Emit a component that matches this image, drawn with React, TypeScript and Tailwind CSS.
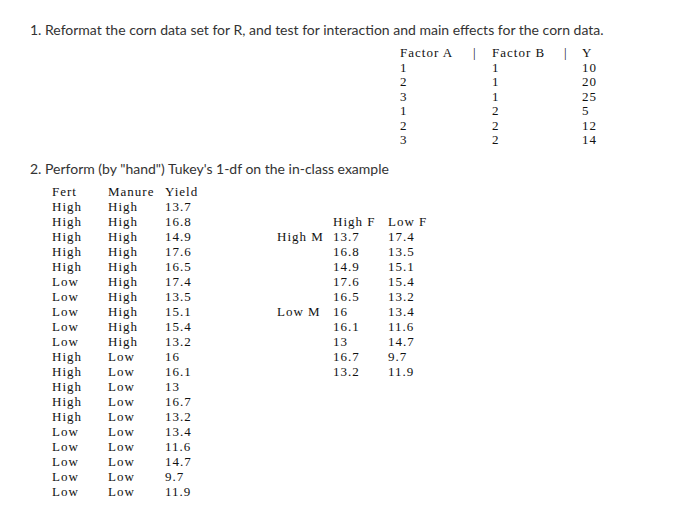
import React from "react";

const topRows = [
  ["1", "1", "10"],
  ["2", "1", "20"],
  ["3", "1", "25"],
  ["1", "2", "5"],
  ["2", "2", "12"],
  ["3", "2", "14"],
];

const leftRows: [string, string, string][] = [
  ["High", "High", "13.7"],
  ["High", "High", "16.8"],
  ["High", "High", "14.9"],
  ["High", "High", "17.6"],
  ["High", "High", "16.5"],
  ["Low", "High", "17.4"],
  ["Low", "High", "13.5"],
  ["Low", "High", "15.1"],
  ["Low", "High", "15.4"],
  ["Low", "High", "13.2"],
  ["High", "Low", "16"],
  ["High", "Low", "16.1"],
  ["High", "Low", "13"],
  ["High", "Low", "16.7"],
  ["High", "Low", "13.2"],
  ["Low", "Low", "13.4"],
  ["Low", "Low", "11.6"],
  ["Low", "Low", "14.7"],
  ["Low", "Low", "9.7"],
  ["Low", "Low", "11.9"],
];

const rightRows: [string, string, string][] = [
  ["High M", "13.7", "17.4"],
  ["", "16.8", "13.5"],
  ["", "14.9", "15.1"],
  ["", "17.6", "15.4"],
  ["", "16.5", "13.2"],
  ["Low M", "16", "13.4"],
  ["", "16.1", "11.6"],
  ["", "13", "14.7"],
  ["", "16.7", "9.7"],
  ["", "13.2", "11.9"],
];

export default function App() {
  return (
    <div className="w-[698px] h-[517px] bg-white pl-[30px] pt-[20px] font-['Lato','Open_Sans',sans-serif] text-[14px] text-[#333] overflow-hidden">
      <p className="leading-[20px] whitespace-nowrap">
        1. Reformat the corn data set for R, and test for interaction and main effects for the corn data.
      </p>
      <div className="ml-[370px] mt-[6px] font-['Liberation_Serif',serif] text-[13px] tracking-[1px] text-[#111] leading-[14.5px]">
        <div className="grid grid-cols-[73px_19px_72px_18px_40px] whitespace-pre">
          <span>Factor A</span>
          <span>|</span>
          <span>Factor B</span>
          <span>|</span>
          <span>Y</span>
          {topRows.map((r, i) => (
            <React.Fragment key={i}>
              <span>{r[0]}</span>
              <span></span>
              <span>{r[1]}</span>
              <span></span>
              <span>{r[2]}</span>
            </React.Fragment>
          ))}
        </div>
      </div>
      <p className="mt-[11px] leading-[20px] whitespace-nowrap">
        2. Perform (by "hand") Tukey's 1-df on the in-class example
      </p>
      <div className="flex mt-[5px] font-['Liberation_Serif',serif] text-[13px] tracking-[1px] text-[#111] leading-[15px]">
        <div className="ml-[22px] w-[225px] grid grid-cols-[56px_57px_60px] content-start whitespace-pre">
          <span>Fert</span>
          <span>Manure</span>
          <span>Yield</span>
          {leftRows.map((r, i) => (
            <React.Fragment key={i}>
              <span>{r[0]}</span>
              <span>{r[1]}</span>
              <span>{r[2]}</span>
            </React.Fragment>
          ))}
        </div>
        <div className="mt-[30px] grid grid-cols-[56px_55px_50px] content-start whitespace-pre">
          <span></span>
          <span>High F</span>
          <span>Low F</span>
          {rightRows.map((r, i) => (
            <React.Fragment key={i}>
              <span>{r[0]}</span>
              <span>{r[1]}</span>
              <span>{r[2]}</span>
            </React.Fragment>
          ))}
        </div>
      </div>
    </div>
  );
}
